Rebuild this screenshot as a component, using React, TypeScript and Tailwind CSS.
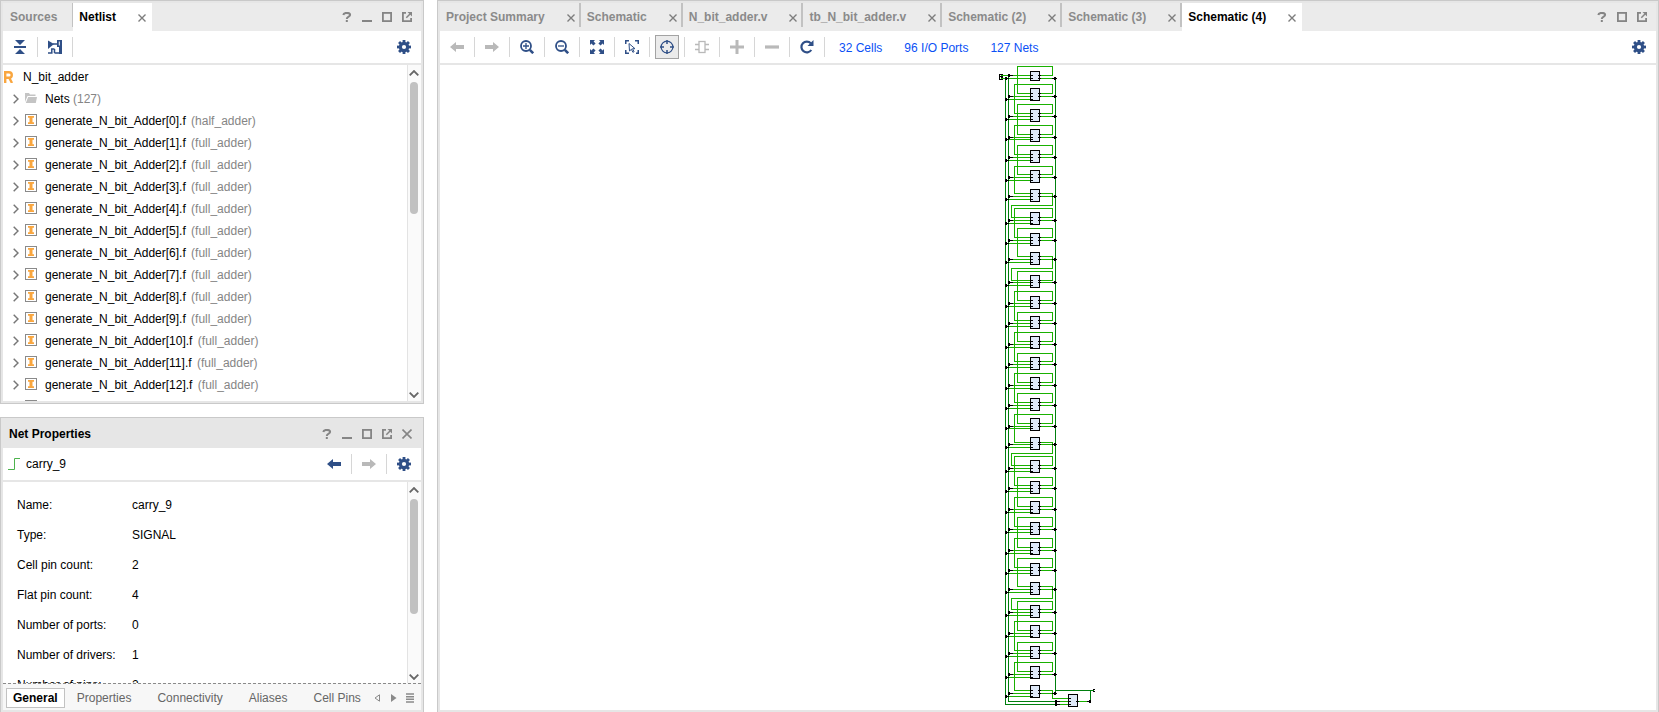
import React from "react";

type IconProps = { className?: string };

/* ---------- icons ---------- */

function Gear() {
  return (
    <svg width="14" height="14" viewBox="0 0 14 14" aria-hidden="true">
      <g fill="#2f4f87">
        {[0, 45, 90, 135].map((a) => (
          <rect key={a} x="5.6" y="0" width="2.8" height="14" transform={`rotate(${a} 7 7)`} />
        ))}
        <circle cx="7" cy="7" r="5.2" />
      </g>
      <circle cx="7" cy="7" r="2.1" fill="#fff" />
    </svg>
  );
}

function Close() {
  return (
    <svg width="8" height="8" viewBox="0 0 8 8" aria-hidden="true">
      <path d="M.5.5l7 7M7.5.5l-7 7" stroke="#7d7d7d" strokeWidth="1.4" />
    </svg>
  );
}

function HeaderIcon({ kind }: { kind: "help" | "min" | "max" | "float" | "close" }) {
  return (
    <svg width="10" height="10" viewBox="0 0 10 10" fill="none" stroke="#858585" aria-hidden="true">
      {kind === "help" && (
        <>
          <path d="M1.3 3C1.5 1.6 2.8.9 4.7.9c2 0 3.4.8 3.4 2.1C8.100 4.700 4.800 4.400 4.800 6.900" strokeWidth="2" />
          <path d="M3.800 9h2" strokeWidth="2" />
        </>
      )}
      {kind === "min" && <path d="M0 9h10" strokeWidth="2" />}
      {kind === "max" && <rect x=".9" y=".9" width="8.2" height="8.200" strokeWidth="1.800" />}
      {kind === "float" && (
        <>
          <path d="M4 .900H.900v8.200h8.200V6" strokeWidth="1.800" />
          <path d="M4.300 5.700L8 2" strokeWidth="1.500" />
          <path d="M5.500 0H10v4.500z" fill="#858585" stroke="none" />
        </>
      )}
      {kind === "close" && <path d="M.5.5l9 9M9.500.5l-9 9" strokeWidth="1.600" />}
    </svg>
  );
}

function Arrow({ dir, on = false }: { dir: "left" | "right"; on?: boolean }) {
  return (
    <svg width="14" height="10" viewBox="0 0 14 10" fill={on ? "#2f4f87" : "#b9b9b9"} aria-hidden="true">
      <path d={dir === "left" ? "M0 5l6-5v3h8v4H6v3z" : "M14 5L8 0v3H0v4h8v3z"} />
    </svg>
  );
}

function Sv({ children }: { children: React.ReactNode }) {
  return (
    <svg width="14" height="14" viewBox="0 0 14 14" fill="none" stroke="#2f4f87" aria-hidden="true">
      {children}
    </svg>
  );
}

const CollapseAll = () => (
  <Sv>
    <path d="M2 0h10L7 5zM2 14h10L7 9z" fill="#2f4f87" stroke="none" />
    <path d="M1 7h12" strokeWidth="2" />
  </Sv>
);

const Hierarchy = () => (
  <Sv>
    <path d="M0 .5L6 4 0 9z" fill="#2f4f87" stroke="none" />
    <path d="M5 4h5M6.500 9H3.800v4H0M6.500 13V9M6.500 13H14" strokeWidth="1.500" />
    <path d="M9 0h5v14h-3V7H9z" fill="#2f4f87" stroke="none" />
    <path d="M11.300 1.500v4" stroke="#fff" strokeWidth="1" />
  </Sv>
);

const Zoom = ({ plus = false }: { plus?: boolean }) => (
  <Sv>
    <circle cx="6" cy="6" r="5" strokeWidth="1.800" />
    <path d={plus ? "M3 6h6M6 3v6" : "M3 6h6"} strokeWidth="1.300" />
    <path d="M9.800 9.800l3.400 3.400" strokeWidth="2.600" />
  </Sv>
);

const Fit = () => (
  <Sv>
    <path d="M0 0h5L3.600 1.400l2 2-2.200 2.200-2-2L0 5zM14 0v5l-1.400-1.400-2 2-2.200-2.200 2-2L9 0zM0 14V9l1.400 1.400 2-2 2.200 2.200-2 2L5 14zM14 14H9l1.400-1.400-2-2 2.200-2.200 2 2L14 9z" fill="#2f4f87" stroke="none" />
  </Sv>
);

const FitSelection = () => (
  <Sv>
    <path d="M.75 4V.75H4M10 .75h3.250V4M.75 10v3.250H4M13.250 10v3.250H11" strokeWidth="1.500" />
    <path d="M4 3.500l6 5.200H7.500l1.600 3-1.200.6-1.500-3L4.500 11z" strokeWidth="1" fill="#fff" />
  </Sv>
);

const Crosshair = () => (
  <Sv>
    <circle cx="7" cy="7" r="5.900" strokeWidth="1.200" />
    <path d="M7 0v4M7 10v4M0 7h4M10 7h4" strokeWidth="1.500" />
  </Sv>
);

const Chip = () => (
  <Sv>
    <g stroke="#b9b9b9">
      <rect x="4" y="1.500" width="6" height="11" strokeWidth="1.300" />
      <path d="M0 4.500h4M0 9.500h4M10 4.500h4M10 9.500h4" strokeWidth="1.500" />
    </g>
  </Sv>
);

const Plus = () => (
  <Sv>
    <path d="M0 7h14M7 0v14" stroke="#b9b9b9" strokeWidth="3" />
  </Sv>
);

const Minus = () => (
  <Sv>
    <path d="M0 7h14" stroke="#b9b9b9" strokeWidth="3.200" />
  </Sv>
);

const Refresh = () => (
  <Sv>
    <path d="M11.300 10A5.400 5.400 0 1 1 10.800 3.300" strokeWidth="2.200" />
    <path d="M13.500 0v6h-6z" fill="#2f4f87" stroke="none" />
  </Sv>
);

function Chevron({ className }: IconProps) {
  return (
    <svg className={className} width="6" height="10" viewBox="0 0 6 10" aria-hidden="true">
      <path d="M.7.700L5 5 .7 9.300" fill="none" stroke="#777" strokeWidth="1.500" />
    </svg>
  );
}

function InstanceIcon() {
  return (
    <svg className="mb-[2px]" width="12" height="12" viewBox="0 0 12 12" aria-hidden="true">
      <rect x=".5" y=".5" width="11" height="11" fill="#fff" stroke="#8a8a8a" />
      <path d="M3 2h6v1.800H7.500v4.400H9V10H3V8.200h1.500V3.800H3z" fill="#f9a63f" />
    </svg>
  );
}

function FolderIcon() {
  return (
    <svg className="mb-[2px]" width="12" height="10" viewBox="0 0 12 10" fill="#c4c4c4" aria-hidden="true">
      <path d="M0 9V0h4l1 1.500h5.500V3H2.500z" />
      <path d="M3.200 4H12l-1.200 6H.8z" />
    </svg>
  );
}

function RootIcon() {
  return (
    <svg className="ml-px" width="10" height="12" viewBox="0 0 10 12" fill="none" stroke="#f9a63f" strokeWidth="2.400" aria-hidden="true">
      <path d="M1.200 12V1.200H5C8.700 1.200 8.700 6.800 5 6.800H1.200M5.200 6.800L8 12" />
    </svg>
  );
}

/* ---------- shared pieces ---------- */

function Panel({ label, className, children }: { label: string; className: string; children: React.ReactNode }) {
  return (
    <section aria-label={label} className={`flex flex-col border border-[#c9c9c9] bg-[#e6e6e6] ${className}`}>
      {children}
    </section>
  );
}

function HeaderButtons({ kinds }: { kinds: ("help" | "min" | "max" | "float" | "close")[] }) {
  return (
    <div className="ml-auto flex items-center gap-[10px] pr-[9px]">
      {kinds.map((k) => (
        <button key={k} type="button" aria-label={k}>
          <HeaderIcon kind={k} />
        </button>
      ))}
    </div>
  );
}

function Tool({ label, sep = true, active = false, children }: { label: string; sep?: boolean; active?: boolean; children: React.ReactNode }) {
  return (
    <>
      <div className="flex w-[34px] shrink-0 items-center justify-center">
        <button
          type="button"
          aria-label={label}
          className={`flex size-6 shrink-0 items-center justify-center ${active ? "border border-[#a3a3a3] bg-[#ebebeb]" : ""}`}
        >
          {children}
        </button>
      </div>
      {sep && <div className="h-5 w-px shrink-0 bg-[#d6d6d6]" />}
    </>
  );
}

function Tab({ name, active = false, last = false }: { name: string; active?: boolean; last?: boolean }) {
  return (
    <div className={`flex h-7 shrink-0 items-start ${active ? "bg-white" : ""}`}>
      <div className="flex h-7 items-center">
        <button type="button" className={`pl-[6px] font-bold ${active ? "text-black" : "text-[#8a8a8a]"}`}>
          {name}
        </button>
        <button type="button" aria-label={`Close ${name}`} className="mt-[2px] ml-[22px]">
          <Close />
        </button>
      </div>
      {last ? <div className="w-[6px]" /> : <div className="ml-1 h-6 w-[2px] bg-[#c2c2c2]" />}
    </div>
  );
}

function ScrollTrack({ thumb }: { thumb: string }) {
  return (
    <div className="flex w-[14px] shrink-0 flex-col items-center border-l border-[#e3e3e3] bg-[#fafafa] pt-[5px] pr-px pb-[3px]">
      <svg width="10" height="6" viewBox="0 0 10 6" aria-hidden="true">
        <path d="M.7 5.300L5 1l4.300 4.300" fill="none" stroke="#666" strokeWidth="1.800" />
      </svg>
      <div className={`mt-[6px] w-2 rounded-full bg-[#c1c1c1] ${thumb}`} />
      <svg className="mt-auto" width="10" height="6" viewBox="0 0 10 6" aria-hidden="true">
        <path d="M.7.700L5 5 9.300.7" fill="none" stroke="#666" strokeWidth="1.800" />
      </svg>
    </div>
  );
}

/* ---------- netlist ---------- */

const instances = Array.from({ length: 14 }, (_, i) => ({
  name: `generate_N_bit_Adder[${i}].f`,
  type: i === 0 ? "(half_adder)" : "(full_adder)",
}));

function Netlist() {
  return (
    <Panel label="Netlist" className="min-h-0 flex-1 p-[2px]">
      <div className="flex h-7 shrink-0 bg-[#ebebeb]">
        <div className="flex h-6 items-start border-r border-[#c2c2c2]">
          <button type="button" className="h-7 pr-[15px] pl-[7px] font-bold text-[#8a8a8a]">
            Sources
          </button>
        </div>
        <Tab name="Netlist" active last />
        <HeaderButtons kinds={["help", "min", "max", "float"]} />
      </div>
      <div className="mb-[2px] flex h-8 shrink-0 items-center bg-white">
        <Tool label="Collapse all"><CollapseAll /></Tool>
        <Tool label="Show hierarchy"><Hierarchy /></Tool>
        <div className="ml-auto flex">
          <Tool label="Settings" sep={false}><Gear /></Tool>
        </div>
      </div>
      <div className="flex min-h-0 flex-1 bg-white">
        <ul className="min-w-0 flex-1 overflow-hidden pt-px">
          <li className="flex h-[22px] items-center">
            <span className="w-5">
              <RootIcon />
            </span>
            N_bit_adder
          </li>
          <li className="flex h-[22px] items-center pl-[10px]">
            <Chevron className="mr-[6px]" />
            <FolderIcon />
            <span className="pl-2">
              Nets <span className="text-[#858585]">(127)</span>
            </span>
          </li>
          {instances.map((it) => (
            <li key={it.name} className="flex h-[22px] shrink-0 items-center pl-[10px]">
              <Chevron className="mr-[6px]" />
              <InstanceIcon />
              <span className="pl-2">
                {it.name} <span className="pl-[2px] text-[#858585]">{it.type}</span>
              </span>
            </li>
          ))}
        </ul>
        <ScrollTrack thumb="h-[132px]" />
      </div>
    </Panel>
  );
}

/* ---------- net properties ---------- */

const properties: [string, string][] = [
  ["Name:", "carry_9"],
  ["Type:", "SIGNAL"],
  ["Cell pin count:", "2"],
  ["Flat pin count:", "4"],
  ["Number of ports:", "0"],
  ["Number of drivers:", "1"],
  ["Number of pins:", "2"],
];

function NetProperties() {
  return (
    <Panel label="Net Properties" className="h-[295px] shrink-0 border-b-0 p-[2px]">
      <div className="flex h-7 shrink-0 items-center">
        <h2 className="pl-[6px] font-bold">Net Properties</h2>
        <HeaderButtons kinds={["help", "min", "max", "float", "close"]} />
      </div>
      <div className="mb-[2px] flex h-8 shrink-0 items-center bg-white">
        <svg className="ml-[5px]" width="12" height="12" viewBox="0 0 12 12" aria-hidden="true">
          <path d="M0 11.500H6.500V.5H12" fill="none" stroke="#4db34d" />
        </svg>
        <span className="pl-[6px]">carry_9</span>
        <div className="ml-auto flex items-center">
          <Tool label="Previous"><Arrow dir="left" on /></Tool>
          <Tool label="Next"><Arrow dir="right" /></Tool>
          <Tool label="Settings" sep={false}><Gear /></Tool>
        </div>
      </div>
      <div className="flex min-h-0 flex-1 bg-white">
        <div className="min-w-0 flex-1 overflow-hidden pt-2 pl-[14px]">
          <table className="border-collapse text-left">
            <tbody>
              {properties.map(([k, v]) => (
                <tr key={k} className="h-[30px]">
                  <th scope="row" className="w-[115px] p-0 font-normal">{k}</th>
                  <td className="p-0">{v}</td>
                </tr>
              ))}
            </tbody>
          </table>
        </div>
        <ScrollTrack thumb="h-[115px]" />
      </div>
      <div className="flex h-[27px] shrink-0 items-center border-t border-dashed border-[#8a8a8a] bg-[#f7f7f7] pt-px pl-[3px] text-[#666]">
        <button type="button" className="h-5 border border-[#c2c2c2] bg-white px-[6px] font-bold text-black">General</button>
        <div className="flex gap-[26px] pl-3">
          <button type="button">Properties</button>
          <button type="button">Connectivity</button>
          <button type="button">Aliases</button>
          <button type="button">Cell Pins</button>
        </div>
        <div className="ml-auto flex items-center pr-[7px]">
          <button type="button" aria-label="Scroll tabs left">
            <svg width="6" height="8" viewBox="0 0 6 8"><path d="M5.500.800v6.400L1 4z" fill="none" stroke="#8a8a8a" /></svg>
          </button>
          <button type="button" aria-label="Scroll tabs right" className="ml-[11px]">
            <svg width="6" height="8" viewBox="0 0 6 8"><path d="M0 0v8l5.500-4z" fill="#8a8a8a" /></svg>
          </button>
          <button type="button" aria-label="List tabs" className="ml-[9px]">
            <svg width="8" height="10" viewBox="0 0 8 10"><path d="M0 1h8M0 3.700h8M0 6.300h8M0 9h8" stroke="#8a8a8a" strokeWidth="1.400" /></svg>
          </button>
        </div>
      </div>
    </Panel>
  );
}

/* ---------- schematic ---------- */

// One row per adder cell: [cell top, carry-in y, a y, b y, carry loop y, carry loop x]
const cells: number[][] = [
  [71, 75, 75, 78, 66, 1017],
  [88, 93, 96, 99, 84, 1014],
  [109, 113, 116, 119, 104, 1017],
  [129, 134, 137, 139, 125, 1014],
  [150, 154, 157, 160, 145, 1017],
  [170, 174, 177, 180, 166, 1014],
  [189, 193, 196, 199, 205, 1011],
  [212, 217, 220, 223, 208, 1014],
  [233, 237, 240, 243, 228, 1017],
  [252, 256, 259, 262, 268, 1011],
  [275, 280, 282, 285, 271, 1017],
  [296, 300, 303, 306, 291, 1014],
  [316, 320, 323, 326, 312, 1017],
  [336, 341, 344, 347, 332, 1014],
  [357, 361, 364, 367, 353, 1017],
  [377, 382, 385, 388, 373, 1014],
  [398, 402, 405, 408, 393, 1017],
  [418, 423, 426, 428, 414, 1014],
  [437, 442, 444, 447, 453, 1011],
  [460, 465, 468, 471, 456, 1014],
  [481, 485, 488, 491, 477, 1017],
  [501, 506, 509, 512, 497, 1014],
  [522, 526, 529, 532, 517, 1017],
  [542, 547, 550, 553, 538, 1014],
  [563, 567, 570, 573, 558, 1017],
  [582, 586, 589, 592, 598, 1011],
  [605, 609, 612, 615, 601, 1017],
  [625, 630, 633, 636, 621, 1014],
  [646, 650, 653, 656, 642, 1017],
  [666, 671, 674, 677, 662, 1014],
  [685, 690, 693, 696, 0, 0],
];

function Schematic() {
  return (
    <svg className="shrink-0" width="100" height="643" viewBox="998 65 100 643" shapeRendering="crispEdges" role="img" aria-label="32-bit ripple carry adder schematic">
      <g transform="translate(.5 .5)" fill="none" strokeWidth="1">
        <g stroke="#19b100">
          {cells.map(([, c, a, b, ly, lx], i) => (
            <React.Fragment key={i}>
              <path d={`M1009 ${a}H1030M1006 ${b}H1030M1040 ${i === 0 ? b : a}H1055`} />
              {ly > 0 && <path d={`M1040 ${c}H1052V${ly}H${lx}V${cells[i + 1][1]}H1030`} />}
            </React.Fragment>
          ))}
          <path d="M1040 690H1052V698H1068M1056 701H1068M1056 704H1068M1078 701H1090M1000 75H1008M1000 78H1005" />
        </g>
        <g stroke="#007f0e">
          <path d="M1005 78V704H1056M1008 75V701H1056M1055 78V693M1055 690H1093M1090 690V701" />
        </g>
        <g stroke="#000">
          {cells.map(([t, c, a, b], i) => {
            const sum = i === 0 ? b : a;
            return (
              <React.Fragment key={i}>
                <rect x="1030" y={t} width="9" height={i === 0 ? 9 : 12} fill="#dfe9f8" />
                <path d={`M1029 ${c}h3M1029 ${a}h3M1029 ${b}h3M1037 ${c}h3M1037 ${sum}h3`} />
                <path d={`M1008 ${a}h4M1005 ${b}h3M1051 ${sum}h5`} />
                <rect x="1008" y={a - 1} width="1" height="2" fill="#000" />
                <rect x="1005" y={b - 1} width="1" height="2" fill="#000" />
                <rect x="1054" y={sum - 1} width="1" height="2" fill="#000" />
              </React.Fragment>
            );
          })}
          <rect x="1068" y="694" width="9" height="12" fill="#dfe9f8" />
          <path d="M1067 698h3M1067 701h3M1067 704h3M1075 701h3M1055 701h4M1055 704h4M1086 701h4" />
          <rect x="1055" y="700" width="1" height="5" fill="#000" />
          <rect x="1089" y="700" width="1" height="2" fill="#000" />
          <path d="M1002 74H999V79H1002M999 76H1002M1000 77H1002M1092 689H1094M1092 691H1094M1095 690h0" />
        </g>
      </g>
    </svg>
  );
}

function SchematicPanel() {
  return (
    <Panel label="Schematic" className="min-w-0 flex-1 border-b-0 p-[2px]">
      <div className="flex h-7 shrink-0 bg-[#ebebeb]">
        <Tab name="Project Summary" />
        <Tab name="Schematic" />
        <Tab name="N_bit_adder.v" />
        <Tab name="tb_N_bit_adder.v" />
        <Tab name="Schematic (2)" />
        <Tab name="Schematic (3)" />
        <Tab name="Schematic (4)" active last />
        <HeaderButtons kinds={["help", "max", "float"]} />
      </div>
      <div className="mb-[2px] flex h-8 shrink-0 items-center bg-white">
        <Tool label="Back"><Arrow dir="left" /></Tool>
        <Tool label="Forward"><Arrow dir="right" /></Tool>
        <Tool label="Zoom in"><Zoom plus /></Tool>
        <Tool label="Zoom out"><Zoom /></Tool>
        <Tool label="Zoom fit"><Fit /></Tool>
        <Tool label="Select area"><FitSelection /></Tool>
        <Tool label="Autofit selection" active><Crosshair /></Tool>
        <Tool label="Expand cell"><Chip /></Tool>
        <Tool label="Add"><Plus /></Tool>
        <Tool label="Remove"><Minus /></Tool>
        <Tool label="Regenerate"><Refresh /></Tool>
        <nav className="flex gap-[22px] pt-px pl-[14px] text-[#0a50f5]">
          <a href="#cells">32 Cells</a>
          <a href="#ports">96 I/O Ports</a>
          <a href="#nets">127 Nets</a>
        </nav>
        <div className="ml-auto flex">
          <Tool label="Settings" sep={false}><Gear /></Tool>
        </div>
      </div>
      <div className="flex min-h-0 flex-1 justify-center overflow-hidden bg-white">
        <Schematic />
      </div>
    </Panel>
  );
}

export default function App() {
  return (
    <main className="flex h-screen gap-[13px] bg-white font-['Liberation_Sans',Arial,sans-serif] text-[12px] leading-4 text-black">
      <div className="flex w-[424px] shrink-0 flex-col gap-[13px]">
        <Netlist />
        <NetProperties />
      </div>
      <SchematicPanel />
    </main>
  );
}
